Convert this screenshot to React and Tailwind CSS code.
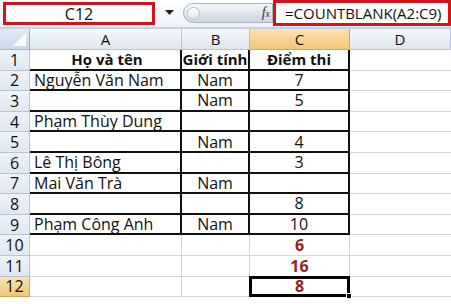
import React from "react";

const rows = [
  { a: "Họ và tên", b: "Giới tính", c: "Điểm thi", head: true },
  { a: "Nguyễn Văn Nam", b: "Nam", c: "7" },
  { a: "", b: "Nam", c: "5" },
  { a: "Phạm Thùy Dung", b: "", c: "" },
  { a: "", b: "Nam", c: "4" },
  { a: "Lê Thị Bông", b: "", c: "3" },
  { a: "Mai Văn Trà", b: "Nam", c: "" },
  { a: "", b: "", c: "8" },
  { a: "Phạm Công Anh", b: "Nam", c: "10" },
  { a: "", b: "", c: "6", red: true },
  { a: "", b: "", c: "16", red: true },
  { a: "", b: "", c: "8", red: true, selected: true },
];

const App = () => {
  return (
    <div className="w-[451px] h-[304px] overflow-hidden bg-white text-[#111] font-['Open_Sans',sans-serif]">
      {/* --- FORMULA BAR --- */}
      <div className="h-[29px] flex items-start bg-gradient-to-b from-white to-[#edf1f7] border-b-2 border-[#c3d2e4]">
        <div className="ml-[3px] mt-[2px] w-[152px] h-[23px] border-[3px] border-[#d3141c] bg-white flex items-center justify-center text-[16px] leading-none">
          C12
        </div>
        <div className="w-[28px] h-[25px] flex items-center justify-center">
          <svg width="9" height="6" viewBox="0 0 9 6">
            <path d="M0 0 L9 0 L4.5 5 Z" fill="#222" />
          </svg>
        </div>
        <div className="mt-[3px] w-[90px] h-[20px] rounded-l-full border border-[#a9b4c2] bg-gradient-to-b from-[#f4f6f9] to-[#cfd6df] flex items-center justify-between pl-[3px] pr-[2px]">
          <span className="w-[13px] h-[13px] rounded-full border border-[#b9c1cc] bg-gradient-to-b from-white to-[#dfe4ea]"></span>
          <span className="font-['Liberation_Serif',serif] italic text-[14px] leading-none text-[#333]">
            f<span className="text-[10px]">x</span>
          </span>
        </div>
        <div className="flex-1 h-[26px] border-[3px] border-[#d3141c] bg-white flex items-center pl-[9px] text-[15px] leading-none whitespace-nowrap">
          =COUNTBLANK(A2:C9)
        </div>
      </div>

      {/* --- SHEET GRID --- */}
      <div className="grid grid-cols-[30px_152px_68px_100px_1fr] grid-rows-[21px_repeat(12,20.6px)] text-[16px] leading-none">
        {/* corner */}
        <div className="relative bg-gradient-to-b from-[#e3ebf5] to-[#c9d8ea] border-r border-b border-[#9fb5cf]">
          <svg className="absolute right-[3px] bottom-[3px]" width="13" height="13" viewBox="0 0 13 13">
            <path d="M13 0 L13 13 L0 13 Z" fill="#ffffff" />
          </svg>
        </div>
        {["A", "B", "C", "D"].map((col) => (
          <div
            key={col}
            className={
              col === "C"
                ? "flex items-center justify-center text-[15px] bg-gradient-to-b from-[#fbe3b3] to-[#f3c574] border-r border-b border-[#d8a751]"
                : "flex items-center justify-center text-[15px] bg-gradient-to-b from-[#f6f8fb] to-[#dde5ee] border-r border-b border-[#b4c4d6]"
            }
          >
            {col}
          </div>
        ))}

        {rows.map((r, i) => {
          const n = i + 1;
          const boxed = n <= 9;
          const cellBorder = boxed ? "border-r-2 border-b-2 border-[#111]" : "border-r border-b border-[#d6d6d6]";
          const head = r.head ? "text-[15px] font-bold" : "";
          return (
            <React.Fragment key={n}>
              <div
                className={
                  r.selected
                    ? "flex items-center justify-center bg-gradient-to-b from-[#fbe3b3] to-[#f3c574] border-r border-b border-[#d8a751]"
                    : "flex items-center justify-center bg-gradient-to-b from-[#eef3f9] to-[#dfe7f1] border-r border-b border-[#b4c4d6]"
                }
              >
                {n}
              </div>
              <div className={`flex items-center pl-[4px] whitespace-nowrap ${cellBorder} ${r.head ? "justify-center" : ""} ${head}`}>
                {r.a}
              </div>
              <div className={`flex items-center justify-center whitespace-nowrap ${cellBorder} ${head}`}>
                {r.b}
              </div>
              <div
                className={`relative flex items-center justify-center ${cellBorder} ${head} ${
                  r.red ? "font-bold text-[#9c1b1b]" : ""
                }`}
              >
                {r.c}
                {r.selected && (
                  <div className="absolute -left-[1px] -top-[1px] -right-[1px] -bottom-[1px] border-[3px] border-black">
                    <span className="absolute -right-[5px] -bottom-[5px] w-[6px] h-[6px] bg-black border border-white"></span>
                  </div>
                )}
              </div>
              <div className="border-b border-[#d6d6d6]"></div>
            </React.Fragment>
          );
        })}
      </div>
    </div>
  );
};

export default App;
